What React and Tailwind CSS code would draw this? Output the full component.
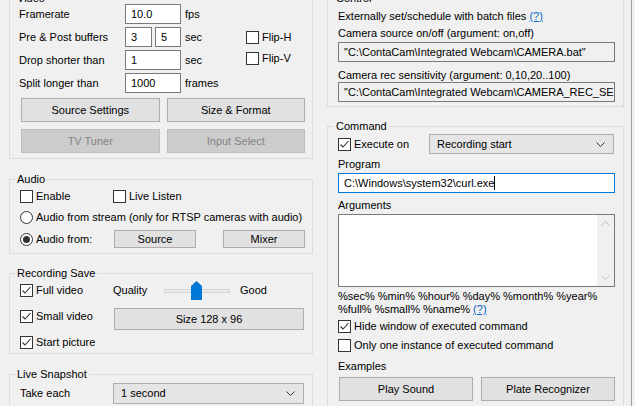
import React from "react";

const GroupBox = ({ title, className = "", legendClass = "ml-[5px]", children }) => (
  <fieldset className={"border border-[#dcdcdc] " + className}>
    <legend className={"px-[2px] leading-[12px] " + legendClass}>{title}</legend>
    {children}
  </fieldset>
);

const Edit = ({ value, className = "", caret = false }) => (
  <div
    className={
      "flex items-center h-[20px] border border-[#7a7a7a] bg-white pl-[5px] whitespace-nowrap overflow-hidden " +
      className
    }
  >
    {value}
    {caret && <span className="inline-block w-px h-[14px] bg-black" />}
  </div>
);

const Btn = ({ children, disabled = false, className = "" }) => (
  <button
    className={
      "flex items-center justify-center border whitespace-nowrap " +
      (disabled
        ? "bg-[#cccccc] border-[#bfbfbf] text-[#838383] "
        : "bg-[#e1e1e1] border-[#adadad] text-black ") +
      className
    }
  >
    {children}
  </button>
);

const Check = ({ checked = false, label, className = "" }) => (
  <div className={"flex items-center " + className}>
    <span className="w-[13px] h-[13px] shrink-0 border border-[#333333] bg-white flex items-center justify-center">
      {checked && (
        <svg width="11" height="11" viewBox="0 0 11 11">
          <polyline points="1.5,5.5 4,8 9.5,2" fill="none" stroke="#333333" strokeWidth="1.1" />
        </svg>
      )}
    </span>
    <span className="ml-[3px] whitespace-nowrap">{label}</span>
  </div>
);

const Radio = ({ checked = false, label, className = "" }) => (
  <div className={"flex items-center " + className}>
    <span className="w-[13px] h-[13px] shrink-0 rounded-full border border-[#333333] bg-white flex items-center justify-center">
      {checked && <span className="w-[7px] h-[7px] rounded-full bg-[#333333]" />}
    </span>
    <span className="ml-[3px] whitespace-nowrap">{label}</span>
  </div>
);

const Chevron = ({ up = false, color = "#333333" }) => (
  <svg width="9" height="5" viewBox="0 0 9 5">
    <polyline
      points={up ? "0.5,4.5 4.5,0.5 8.5,4.5" : "0.5,0.5 4.5,4.5 8.5,0.5"}
      fill="none"
      stroke={color}
      strokeWidth="1"
    />
  </svg>
);

const Combo = ({ value, className = "" }) => (
  <div
    className={
      "flex items-center justify-between border border-[#adadad] bg-[#e5e5e5] pl-[7px] pr-[8px] " + className
    }
  >
    <span className="whitespace-nowrap">{value}</span>
    <Chevron />
  </div>
);

const Slider = () => (
  <div className="relative w-[66px] h-[19px] flex items-center">
    <div className="w-full h-[4px] bg-[#e7eaea] border border-[#d6d6d6]" />
    <svg className="absolute left-[27px] top-0" width="11" height="19" viewBox="0 0 11 19">
      <polygon points="0,5 5.5,0 11,5 11,19 0,19" fill="#0078d7" />
    </svg>
  </div>
);

const Link = () => <span className="text-[#0066cc] underline">(?)</span>;

const App = () => {
  return (
    <div className="w-[635px] h-[406px] overflow-hidden bg-[#f0f0f0] text-black text-[11px] leading-[13px] font-['Liberation_Sans',Arial,sans-serif]">
      <div className="flex pl-[9px] gap-[14px] w-[632px] h-[406px] border-r border-[#a0a0a0]">
        {/* Left column */}
        <div className="w-[304px] -mt-[8px] flex flex-col">
          <GroupBox title="Video">
            <div className="pl-[9px] pr-[7px] pb-[5px]">
              <div className="flex flex-col gap-[3px]">
                <div className="flex items-center h-[20px]">
                  <span className="w-[106px]">Framerate</span>
                  <Edit value="10.0" className="w-[56px]" />
                  <span className="ml-[4px]">fps</span>
                </div>
                <div className="flex items-center h-[20px]">
                  <span className="w-[106px]">Pre &amp; Post buffers</span>
                  <Edit value="3" className="w-[27px]" />
                  <Edit value="5" className="w-[26px] ml-[3px]" />
                  <span className="ml-[4px] w-[61px]">sec</span>
                  <Check label="Flip-H" />
                </div>
                <div className="flex items-center h-[20px]">
                  <span className="w-[106px]">Drop shorter than</span>
                  <Edit value="1" className="w-[56px]" />
                  <span className="ml-[4px] w-[61px]">sec</span>
                  <Check label="Flip-V" className="-mt-[3px]" />
                </div>
                <div className="flex items-center h-[20px]">
                  <span className="w-[106px]">Split longer than</span>
                  <Edit value="1000" className="w-[56px]" />
                  <span className="ml-[4px]">frames</span>
                </div>
              </div>
              <div className="mt-[5px] ml-[2px] grid grid-cols-2 gap-x-[7px] gap-y-[7px]">
                <Btn className="h-[24px]">Source Settings</Btn>
                <Btn className="h-[24px]">Size &amp; Format</Btn>
                <Btn className="h-[24px]" disabled>
                  TV Tuner
                </Btn>
                <Btn className="h-[24px]" disabled>
                  Input Select
                </Btn>
              </div>
            </div>
          </GroupBox>

          <GroupBox title="Audio" className="mt-[14px]">
            <div className="pl-[10px] pt-[4px] pb-[5px]">
              <div className="flex items-center h-[14px]">
                <Check label="Enable" className="w-[93px]" />
                <Check label="Live Listen" />
              </div>
              <div className="flex items-center h-[14px] mt-[7px]">
                <Radio label="Audio from stream (only for RTSP cameras with audio)" />
              </div>
              <div className="flex items-center h-[18px] mt-[6px]">
                <Radio checked label="Audio from:" className="w-[94px]" />
                <Btn className="w-[82px] h-[18px]">Source</Btn>
                <Btn className="w-[82px] h-[18px] ml-[27px]">Mixer</Btn>
              </div>
            </div>
          </GroupBox>

          <GroupBox title="Recording Save" className="mt-[13px]">
            <div className="pl-[10px] pt-[2px] pb-[4px]">
              <div className="flex items-center h-[19px]">
                <Check checked label="Full video" className="w-[93px]" />
                <span className="w-[51px]">Quality</span>
                <Slider />
                <span className="ml-[10px]">Good</span>
              </div>
              <div className="flex items-start mt-[8px]">
                <Check checked label="Small video" className="w-[94px] mt-[2px]" />
                <Btn className="w-[190px] h-[22px]">Size 128 x 96</Btn>
              </div>
              <div className="flex items-center h-[14px] mt-[5px]">
                <Check checked label="Start picture" />
              </div>
            </div>
          </GroupBox>

          <GroupBox title="Live Snapshot" className="mt-[14px]">
            <div className="pl-[10px] pt-[3px] pb-[6px]">
              <div className="flex items-center">
                <span className="w-[93px]">Take each</span>
                <Combo value="1 second" className="w-[191px] h-[21px]" />
              </div>
            </div>
          </GroupBox>
        </div>

        {/* Right column */}
        <div className="w-[297px] -mt-[8px] flex flex-col">
          <GroupBox title="Control" legendClass="ml-[6px]">
            <div className="pl-[10px] pr-[8px] pb-[4px]">
              <div className="mt-[6px] whitespace-nowrap">
                Externally set/schedule with batch files <Link />
              </div>
              <div className="mt-[4px] whitespace-nowrap">Camera source on/off (argument: on,off)</div>
              <Edit
                value={'"C:\\ContaCam\\Integrated Webcam\\CAMERA.bat"'}
                className="mt-[2px] w-[277px] !bg-[#f0f0f0]"
              />
              <div className="mt-[7px] whitespace-nowrap">Camera rec sensitivity (argument: 0,10,20..100)</div>
              <Edit
                value={'"C:\\ContaCam\\Integrated Webcam\\CAMERA_REC_SENSITIVITY.bat"'}
                className="w-[277px] !bg-[#f0f0f0]"
              />
            </div>
          </GroupBox>

          <GroupBox title="Command" legendClass="ml-[6px]" className="mt-[13px]">
            <div className="pl-[10px] pr-[8px] pt-[2px] pb-[8px]">
              <div className="flex items-center h-[20px]">
                <Check checked label="Execute on" className="w-[91px]" />
                <Combo value="Recording start" className="w-[185px] h-[20px]" />
              </div>
              <div className="mt-[4px]">Program</div>
              <Edit value="C:\Windows\system32\curl.exe" caret className="mt-[2px] w-[277px] !border-[#0078d7]" />
              <div className="mt-[6px]">Arguments</div>
              <div className="mt-[2px] w-[277px] h-[73px] border border-[#7a7a7a] bg-white flex justify-end">
                <div className="w-[17px] h-full bg-[#f0f0f0] flex flex-col items-center justify-between py-[6px]">
                  <Chevron up color="#bfbfbf" />
                  <Chevron color="#bfbfbf" />
                </div>
              </div>
              <div className="mt-[3px] whitespace-nowrap">%sec% %min% %hour% %day% %month% %year%</div>
              <div className="whitespace-nowrap">
                %full% %small% %name% <Link />
              </div>
              <div className="flex items-center h-[14px] mt-[3px]">
                <Check checked label="Hide window of executed command" />
              </div>
              <div className="flex items-center h-[14px] mt-[5px]">
                <Check label="Only one instance of executed command" />
              </div>
              <div className="mt-[8px]">Examples</div>
              <div className="mt-[4px] ml-[1px] flex gap-[8px]">
                <Btn className="w-[134px] h-[24px]">Play Sound</Btn>
                <Btn className="w-[134px] h-[24px]">Plate Recognizer</Btn>
              </div>
            </div>
          </GroupBox>
        </div>
      </div>
    </div>
  );
};

export default App;
